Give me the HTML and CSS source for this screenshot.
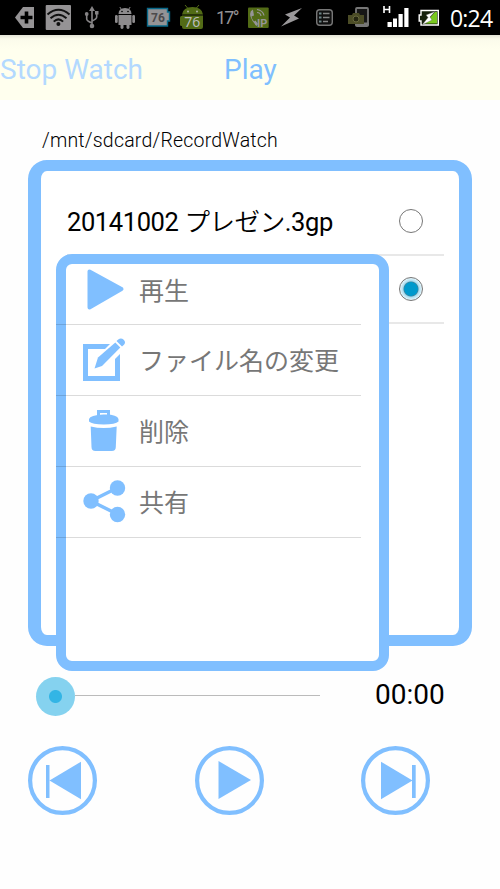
FILE: index.html
```html
<!DOCTYPE html>
<html lang="ja">
<head>
<meta charset="utf-8">
<title>Record Watch</title>
<link rel="stylesheet" href="styles.css">
</head>
<body>
<header class="status">
  <svg width="40" height="35" viewBox="0 0 40 35"><path d="M15 17.500L23 7h11v21H23z" fill="#959395"/><path d="M20.500 17.500h12M26.500 11.500v12" stroke="#000" stroke-width="3.600"/></svg>
  <svg width="38" height="35" viewBox="40 0 38 35"><rect x="45.700" y="5" width="25.300" height="25" rx="1" fill="#959395"/><g fill="none" stroke="#111" stroke-width="2"><path d="M47.500 14.500q11-9.500 22 0M50.500 18.200q8-7 16 0M53.700 21.600q4.700-4.500 9.400 0"/></g><circle cx="58.400" cy="24" r="2" fill="#111"/></svg>
  <svg width="30" height="35" viewBox="78 0 30 35"><g fill="none" stroke="#858385" stroke-width="1.600"><path d="M92 9v17M86.700 14v5q0 2 5.300 4M96.700 13v4q0 2-4.700 4"/></g><path d="M89 11l3-5 3 5z" fill="#858385"/><circle cx="92" cy="26" r="2.300" fill="#858385"/><circle cx="86.700" cy="14" r="1.900" fill="#858385"/><path d="M95 11h3.500v3.500H95z" fill="#858385"/></svg>
  <svg width="34" height="35" viewBox="108 0 34 35"><g fill="#8d8b8d"><path d="M118.500 14q0-6 6.500-6t6.500 6zM118.500 15h13v10h-13z"/><rect x="115" y="15" width="2.700" height="8" rx="1.300"/><rect x="132.300" y="15" width="2.700" height="8" rx="1.300"/><rect x="120.500" y="22" width="3" height="7" rx="1.400"/><rect x="126.500" y="22" width="3" height="7" rx="1.400"/></g><path d="M121.500 9.500l-1.700-2.500M128.500 9.500l1.700-2.500" stroke="#8d8b8d"/><circle cx="122" cy="11.500" r=".8"/><circle cx="128" cy="11.500" r=".8"/></svg>
  <svg width="34" height="35" viewBox="142 0 34 35"><path d="M147.500 8.500h20v3.500h2v9h-2v5h-20z" fill="#959395" stroke="#08698a" stroke-width="1.400"/><text class="battery-num" x="151" y="22">76</text></svg>
  <svg width="34" height="35" viewBox="176 0 34 35"><g fill="#526b16"><path d="M182 14.500q1-7.500 10.500-7.500T203 14.500zM182 15.500h21v11.500q0 2-2 2h-17q-2 0-2-2z"/><rect x="180" y="16" width="4" height="10" rx="1.500"/></g><path d="M188 8.500l-3-3.500M196 8.500l3-3.500" stroke="#526b16"/><circle cx="188" cy="11.500" r=".9" fill="#bbb"/><circle cx="197" cy="11.500" r=".9" fill="#bbb"/><text class="droid-num" x="184.300" y="26.500">76</text></svg>
  <span class="temp">17°</span>
  <svg width="33" height="35" viewBox="242 0 33 35"><rect x="248" y="7.500" width="20.700" height="20.500" rx="1" fill="#526b16"/><path d="M253 9.500q-4 2-2.500 7t6 9.500l1.500-2-2.500-3.500-1.500 1q-2-2-2.500-5l2.500-1-1-5.500z" fill="#969596"/><path d="M257 9.500q6 1 7 6M257 12.500q3.500 0 4 3.500" fill="none" stroke="#969596" stroke-width="1.200"/><text class="ip" x="257" y="26.500">IP</text></svg>
  <svg width="35" height="35" viewBox="275 0 35 35"><path d="M302 8l-17 6.500 5 3-9 9 18-8-5-3z" fill="#9a989a"/></svg>
  <svg width="32" height="35" viewBox="310 0 32 35"><rect x="316.700" y="9.700" width="15.600" height="15.600" rx="3" fill="#101010" stroke="#777" stroke-width="1.400"/><path d="M319 13.500h2.500M319 17.500h2.500M319 21.500h2.500" stroke="#6e8588" stroke-width="2"/><path d="M323 13.500h6.500M323 17.500h6.500M323 21.500h5" stroke="#858585" stroke-width="1.700"/></svg>
  <svg width="36" height="35" viewBox="342 0 36 35"><rect x="356" y="8" width="12" height="18" rx="1" fill="#161616" stroke="#777" stroke-width="1.800"/><path d="M355 24h14" stroke="#777" stroke-width="3"/><path d="M348 15h4l1-2h6l1 2h4v9h-16z" fill="#4b4c26"/><circle cx="356" cy="19" r="3" fill="#252611" stroke="#68693e"/></svg>
  <svg width="35" height="35" viewBox="378 0 35 35"><path d="M384 6v7M389.500 6v7M384 9.500h5.500" stroke="#fff" stroke-width="1.600"/><path d="M387.500 22h4.300v5h-4.300zM393 18.500h4v8.500h-4zM398.500 14h4.200v13h-4.200zM404.300 8h4.200v19h-4.200z" fill="#fff"/></svg>
  <svg width="32" height="35" viewBox="413 0 32 35"><path d="M421 10.500h17.300v14.500H421v-4h-1.800v-6H421z" fill="#15200b" stroke="#fff" stroke-width="1.400"/><path d="M437 12v11.500h-12L435 12z" fill="#79c81f"/><path d="M435 11.500l-9 3.500 2 2.500-6 7.500 10-5-2-3z" fill="#fff" stroke="#555" stroke-width=".4"/></svg>
  <span class="clock">0:24</span>
</header>
<nav class="tabs"><span class="tab tab-off">Stop Watch</span><span class="tab">Play</span></nav>
<main>
  <p class="path">/mnt/sdcard/RecordWatch</p>
  <section class="files">
    <div class="file"><span class="file-name">20141002 <span class="kana">プレゼン</span>.3gp</span><span class="radio"></span></div>
    <div class="file"><span class="radio checked"></span></div>
    <div class="menu">
      <div class="item"><svg width="44" height="44" viewBox="0 0 44 44"><path d="M6.500 4.500v36L38.500 22z" fill="#80bfff" stroke="#80bfff" stroke-width="4" stroke-linejoin="round"/></svg><span>再生</span></div>
      <div class="item"><svg width="44" height="44" viewBox="0 0 44 44"><path d="M2.500 9.500h32v32h-32z" fill="none" stroke="#80bfff" stroke-width="5"/><path d="M9 37L15 19 35-1l10 10-23 23z" fill="#fff"/><path d="M11.500 31.500l3.500-11L32.300 5.600l5 5L19 29z" fill="#80bfff"/><path d="M33.500 4l1.700-1.600q3-2 5.500.4t.3 5L39 9.500z" fill="#80bfff"/></svg><span>ファイル名の変更</span></div>
      <div class="item"><svg width="44" height="44" viewBox="0 0 44 44"><path d="M15.500 9V3.500h10V9" fill="none" stroke="#80bfff" stroke-width="3"/><path d="M6 11q1-4 14.500-4.500T35.500 11v2.500q-3 3-14.700 3T6 13.500z" fill="#80bfff"/><path d="M7.700 18.500q13 3 26 0L32.800 39q0 4-4 4H12.500q-4 0-4-4z" fill="#80bfff"/></svg><span>削除</span></div>
      <div class="item"><svg width="44" height="44" viewBox="0 0 44 44"><path d="M34 9L8 22l26 13" fill="none" stroke="#80bfff" stroke-width="3.500"/><g fill="#80bfff"><circle cx="34.500" cy="9" r="7.700"/><circle cx="8" cy="22" r="7.700"/><circle cx="34.500" cy="35.500" r="7.700"/></g></svg><span>共有</span></div>
    </div>
  </section>
  <div class="seek"><span class="thumb"></span><span class="track"></span><span class="time">00:00</span></div>
  <div class="controls">
    <svg width="70" height="70" viewBox="0 0 70 70"><circle cx="34.500" cy="34.500" r="32.400" fill="none" stroke="#80bfff" stroke-width="4.200"/><path d="M18 19h3.500v33H18zM21.500 34.500L53 15.700v37.500z" fill="#80bfff"/></svg>
    <svg width="70" height="70" viewBox="0 0 70 70"><circle cx="34.500" cy="34.500" r="32.400" fill="none" stroke="#80bfff" stroke-width="4.200"/><path d="M23.500 15L56 34 23.500 53z" fill="#80bfff"/></svg>
    <svg width="70" height="70" viewBox="0 0 70 70"><circle cx="34.500" cy="34.500" r="32.400" fill="none" stroke="#80bfff" stroke-width="4.200"/><path d="M51 19h3.700v33H51zM20 15.700l31.500 18.800L20 53.200z" fill="#80bfff"/></svg>
  </div>
</main>
</body>
</html>
```

FILE: styles.css
```css
* { box-sizing: border-box; }
body { margin: 0; width: 500px; height: 889px; overflow: hidden; background: #fefefe; color: #000; font-family: Roboto, "Noto Sans CJK JP", sans-serif; }
svg { display: block; flex: none; }
.status { display: flex; height: 35px; background: #000; }
.temp { width: 32px; padding-left: 6px; font-size: 18px; line-height: 35px; letter-spacing: -1.8px; color: #959395; white-space: nowrap; }
.clock { padding-left: 5px; font-size: 23px; line-height: 36px; letter-spacing: -.8px; color: #fff; white-space: nowrap; font-family: "Open Sans", sans-serif; }
.battery-num { font: bold 12px Roboto, sans-serif; fill: #4c4a4c; }
.droid-num { font: 14px "Noto Sans", sans-serif; fill: #bbb; }
.ip { font: bold 11px Roboto, sans-serif; fill: #969596; }
.tabs { display: flex; height: 65px; background: linear-gradient(#e3e3d6, #fbfbeb 4px, #ffffee 14px); }
.tab { font-size: 28px; line-height: 69px; color: #80bfff; white-space: nowrap; letter-spacing: 0; }
.tab-off { width: 224px; color: #b3d9ff; }
main { padding: 0 28px; }
.path { margin: 0; padding: 27px 0 0 14px; height: 60px; font-size: 19.500px; font-weight: 300; line-height: 28px; letter-spacing: .2px; white-space: nowrap; }
.files { position: relative; height: 486px; padding: 17px 15px 0 26px; border: solid #80bfff; border-width: 11px 13px; border-radius: 19px; background: #fff; }
.file { display: flex; align-items: center; justify-content: flex-end; height: 68px; padding-right: 21px; border-bottom: 2px solid #e8e8e8; }
.file-name { margin-right: auto; padding-top: 1px; font-size: 25.500px; letter-spacing: -.4px; white-space: nowrap; line-height: 36px; }
.kana { font-weight: 350; }
.radio { flex: none; display: grid; place-items: center; width: 24px; height: 24px; border: 1px solid #777; border-radius: 50%; }
.checked { background: radial-gradient(circle, #0099cc 0 6.500px, #3c87a0 7px, #a8dcf0 8px, #e8f6fb 11px); }
.menu { position: absolute; left: 15px; top: 83px; width: 333px; height: 417px; border: 10px solid #80bfff; border-radius: 16px; background: #fff; }
.item { display: flex; align-items: center; gap: 12px; width: 305px; height: 71px; margin-left: -10px; padding-left: 27px; border-bottom: 1.500px solid rgba(0, 0, 0, .14); color: #777; font-size: 25px; white-space: nowrap; }
.item:first-child { height: 61px; padding-bottom: 8px; }
.item svg { margin-bottom: 2px; }
.item span { padding-top: 3px; line-height: 36px; }
.seek { display: flex; align-items: center; height: 100px; padding-left: 8px; }
.thumb { width: 39px; height: 39px; border-radius: 50%; background: radial-gradient(circle, #33b5e5 0 6px, #85d2ef 7px); }
.track { width: 245px; height: 1px; margin-bottom: 1px; background: #bbb; }
.time { margin: 0 0 4px 55px; font-size: 28px; }
.controls { display: flex; justify-content: space-between; width: 403px; }
```
